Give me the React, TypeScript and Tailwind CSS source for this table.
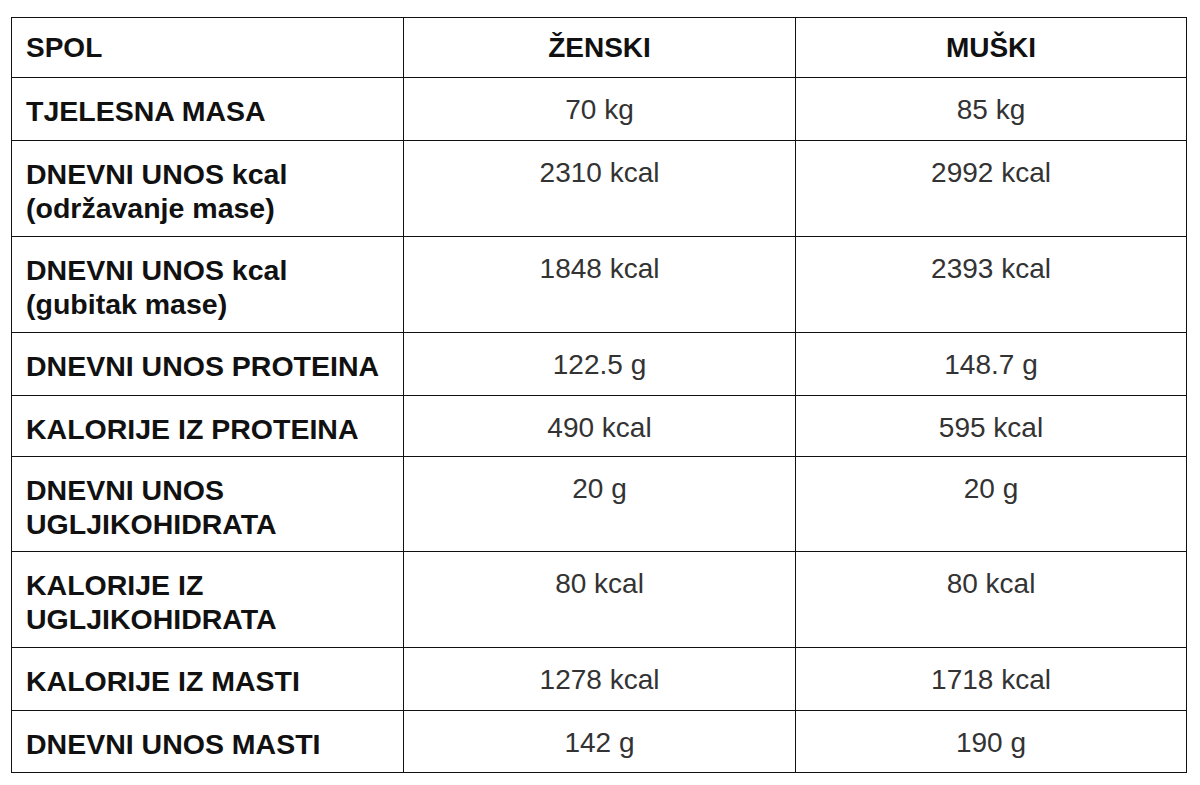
const rows: { label: string[]; f: string; m: string; h: number }[] = [
  { label: ["TJELESNA MASA"], f: "70 kg", m: "85 kg", h: 63 },
  { label: ["DNEVNI UNOS kcal", "(održavanje mase)"], f: "2310 kcal", m: "2992 kcal", h: 96 },
  { label: ["DNEVNI UNOS kcal", "(gubitak mase)"], f: "1848 kcal", m: "2393 kcal", h: 96 },
  { label: ["DNEVNI UNOS PROTEINA"], f: "122.5 g", m: "148.7 g", h: 63 },
  { label: ["KALORIJE IZ PROTEINA"], f: "490 kcal", m: "595 kcal", h: 61 },
  { label: ["DNEVNI UNOS", "UGLJIKOHIDRATA"], f: "20 g", m: "20 g", h: 95 },
  { label: ["KALORIJE IZ", "UGLJIKOHIDRATA"], f: "80 kcal", m: "80 kcal", h: 96 },
  { label: ["KALORIJE IZ MASTI"], f: "1278 kcal", m: "1718 kcal", h: 63 },
  { label: ["DNEVNI UNOS MASTI"], f: "142 g", m: "190 g", h: 62 },
];

export default function App() {
  return (
    <div className="h-[785px] w-[1200px] bg-white pl-[11px] pt-[17px] font-['Liberation_Sans',Arial,sans-serif] text-[28px] leading-[34px]">
      <table className="w-[1175px] table-fixed border-collapse border border-[#111]">
        <colgroup>
          <col className="w-[392px]" />
          <col className="w-[392px]" />
          <col className="w-[391px]" />
        </colgroup>
        <thead>
          <tr className="h-[60px]">
            <th className="border border-[#111] px-[14px] pt-[13px] text-left align-top font-bold text-[#111]">
              SPOL
            </th>
            <th className="border border-[#111] pt-[13px] text-center align-top font-bold text-[#111]">
              ŽENSKI
            </th>
            <th className="border border-[#111] pt-[13px] text-center align-top font-bold text-[#111]">
              MUŠKI
            </th>
          </tr>
        </thead>
        <tbody>
          {rows.map((r, i) => (
            <tr key={i} style={{ height: r.h }}>
              <td className="border border-[#111] px-[14px] pt-[16px] align-top text-[28.5px] font-bold text-[#111]">
                {r.label.map((l, j) => (
                  <div key={j}>{l}</div>
                ))}
              </td>
              <td className="border border-[#111] pt-[15px] text-center align-top text-[#333]">
                {r.f}
              </td>
              <td className="border border-[#111] pt-[15px] text-center align-top text-[#333]">
                {r.m}
              </td>
            </tr>
          ))}
        </tbody>
      </table>
    </div>
  );
}
